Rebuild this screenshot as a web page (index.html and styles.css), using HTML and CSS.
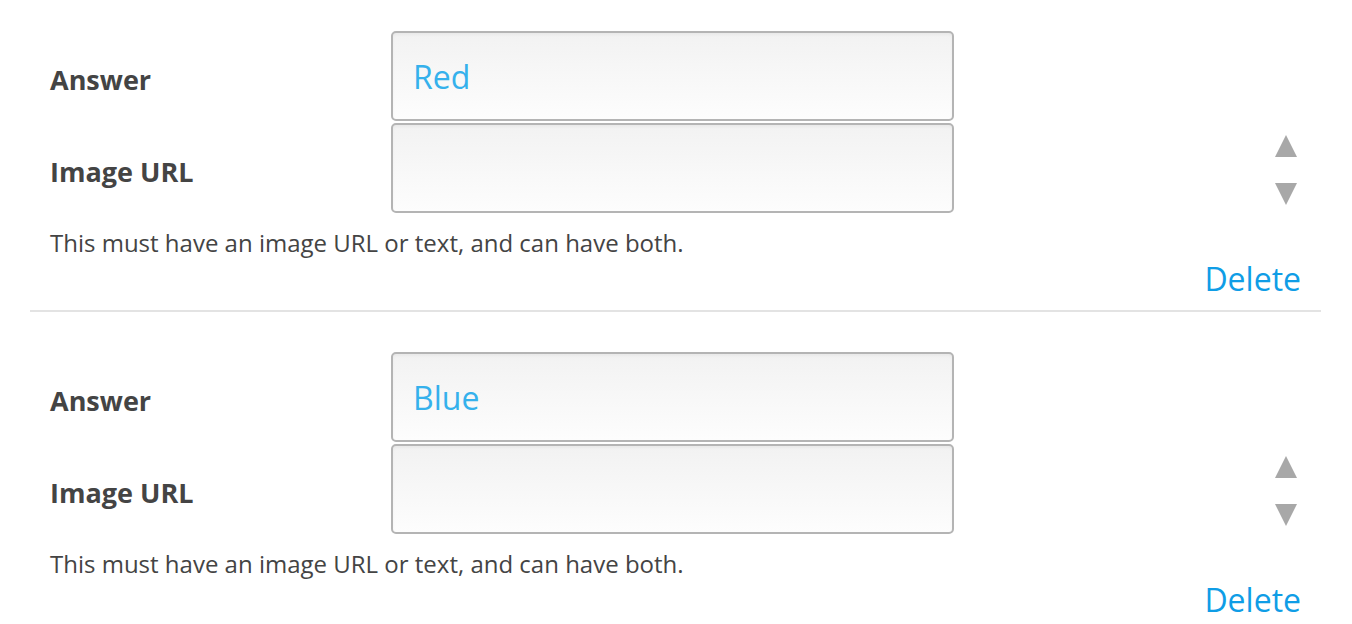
FILE: index.html
```html
<!DOCTYPE html>
<html lang="en">
<head>
<meta charset="utf-8">
<title>Answers</title>
<link rel="stylesheet" href="styles.css">
</head>
<body>
<div class="answers">
  <div class="answer">
    <div class="answer-main">
      <div class="fields">
        <label class="field"><span class="label">Answer</span><input class="input" type="text" value="Red"></label>
        <label class="field"><span class="label">Image URL</span><input class="input" type="text" value=""></label>
      </div>
      <div class="order">
        <svg class="arrow" width="22" height="22" viewBox="0 0 22 22"><polygon points="11,0 22,22 0,22"/></svg>
        <svg class="arrow" width="22" height="22" viewBox="0 0 22 22"><polygon points="0,0 22,0 11,22"/></svg>
      </div>
    </div>
    <p class="help">This must have an image URL or text, and can have both.</p>
    <div class="actions"><a class="delete" href="#">Delete</a></div>
  </div>
  <div class="answer">
    <div class="answer-main">
      <div class="fields">
        <label class="field"><span class="label">Answer</span><input class="input" type="text" value="Blue"></label>
        <label class="field"><span class="label">Image URL</span><input class="input" type="text" value=""></label>
      </div>
      <div class="order">
        <svg class="arrow" width="22" height="22" viewBox="0 0 22 22"><polygon points="11,0 22,22 0,22"/></svg>
        <svg class="arrow" width="22" height="22" viewBox="0 0 22 22"><polygon points="0,0 22,0 11,22"/></svg>
      </div>
    </div>
    <p class="help">This must have an image URL or text, and can have both.</p>
    <div class="actions"><a class="delete" href="#">Delete</a></div>
  </div>
</div>
</body>
</html>
```

FILE: styles.css
```css
html, body {
  margin: 0;
  padding: 0;
  background: #ffffff;
}

body {
  font-family: "Open Sans", "Liberation Sans", sans-serif;
  color: #464646;
  overflow: hidden;
}

.answers {
  margin: 0 31px 0 30px;
  padding-top: 31px;
}

.answer {
  padding: 0 20px 13px 20px;
}

.answer + .answer {
  border-top: 2px solid #e3e3e3;
  padding-top: 40px;
}

.answer-main {
  display: flex;
  align-items: flex-end;
  justify-content: space-between;
}

.fields {
  display: flex;
  flex-direction: column;
  gap: 2px;
}

.field {
  display: flex;
  align-items: center;
}

.label {
  width: 341px;
  font-size: 27px;
  font-weight: 700;
  padding-top: 6px;
  color: #444444;
}

.input {
  box-sizing: border-box;
  width: 563px;
  height: 90px;
  margin: 0;
  padding: 0 20px;
  border: 2px solid #b4b4b4;
  border-radius: 5px;
  background: linear-gradient(#f2f2f2, #fdfdfd);
  box-shadow: inset 0 2px 3px rgba(0, 0, 0, 0.04);
  font-family: "Open Sans", "Liberation Sans", sans-serif;
  font-size: 32px;
  color: #35b1ec;
  outline: none;
}

.order {
  display: flex;
  flex-direction: column;
  gap: 26px;
  margin: 0 4px 8px 0;
}

.arrow {
  display: block;
  fill: #a8a8a8;
}

.help {
  margin: 15px 0 0 0;
  font-size: 24px;
  line-height: 30px;
  color: #444444;
}

.actions {
  display: flex;
  justify-content: flex-end;
  margin-top: 3px;
}

.delete {
  font-size: 32px;
  line-height: 36px;
  color: #0f9de6;
  text-decoration: none;
}
```
